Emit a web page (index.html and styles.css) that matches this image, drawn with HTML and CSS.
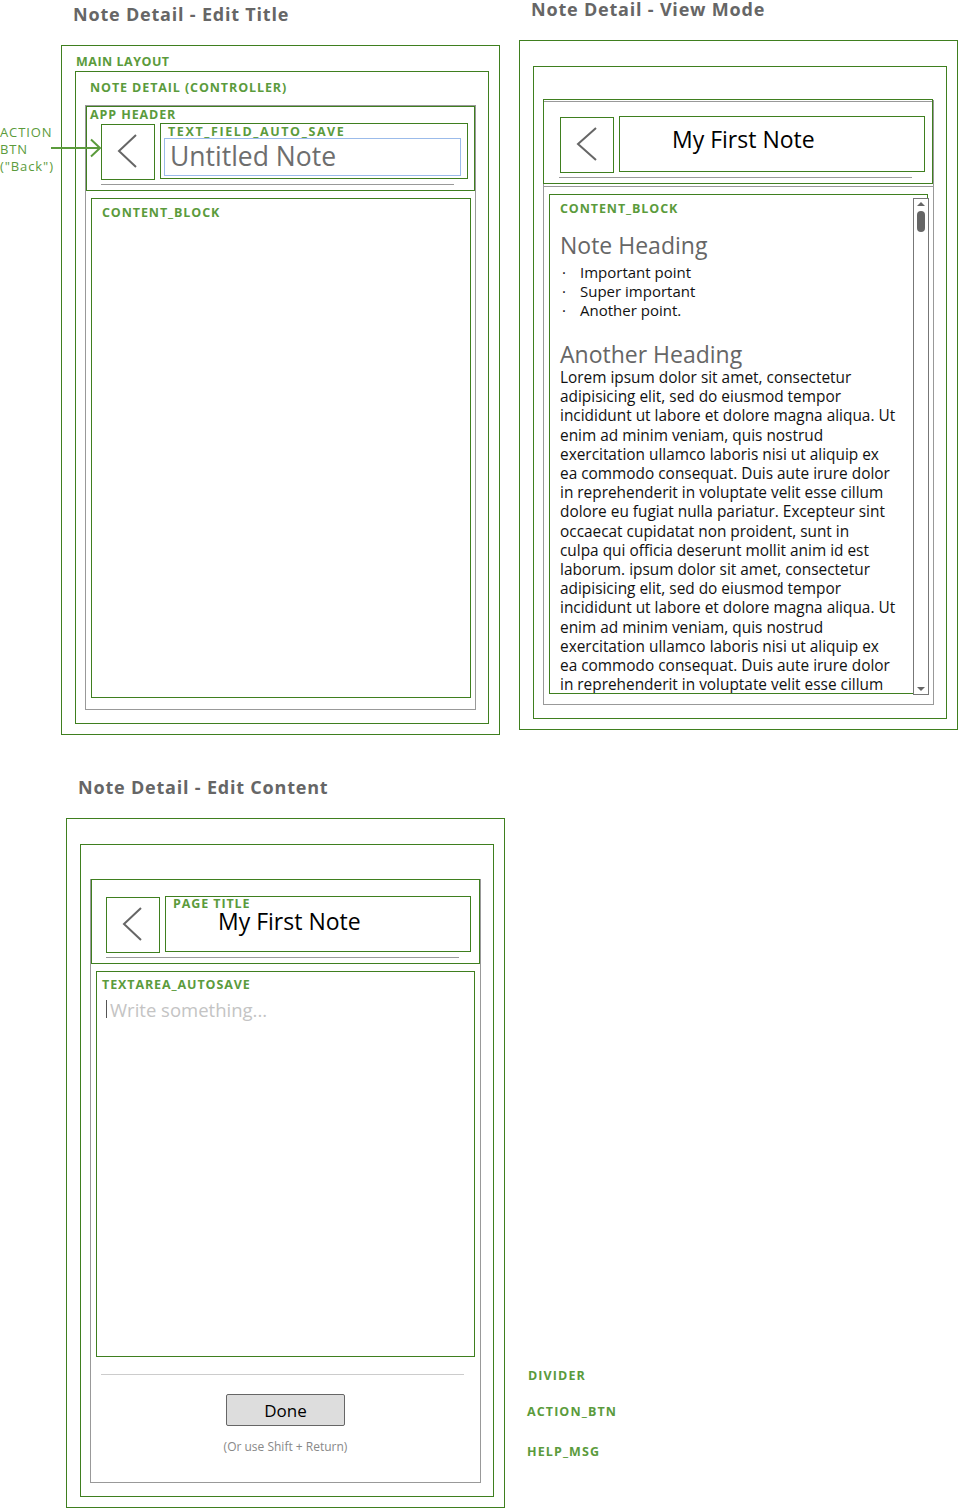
FILE: index.html
```html
<!DOCTYPE html>
<html>
<head>
<meta charset="utf-8">
<title>Note Detail wireframes</title>
<link rel="stylesheet" href="styles.css">
</head>
<body>
<div class="board">

  <section class="sheet sheet-a">
    <h2 class="sheet-title">Note Detail - Edit Title</h2>
    <div class="frame">
      <div class="frame-top"><span class="lbl">MAIN LAYOUT</span></div>
      <div class="ctrl">
        <div class="ctrl-top"><span class="lbl">NOTE DETAIL (CONTROLLER)</span></div>
        <div class="phone">
          <div class="hdr hdr-a">
            <div class="hdr-label lbl">APP HEADER</div>
            <div class="hdr-row">
              <div class="back"><svg width="52" height="54" viewBox="0 0 52 54"><polyline points="34,10 17,26 34,42" fill="none" stroke="#666" stroke-width="2"/></svg></div>
              <div class="field">
                <div class="field-label lbl">TEXT_FIELD_AUTO_SAVE</div>
                <div class="input">Untitled Note</div>
              </div>
            </div>
            <div class="hdr-line"></div>
          </div>
          <div class="content content-a">
            <div class="content-label lbl">CONTENT_BLOCK</div>
          </div>
        </div>
      </div>
    </div>
    <div class="note note-back">ACTION<br>BTN<br>("Back")</div>
    <svg class="arrow" width="52" height="20" viewBox="0 0 52 20"><line x1="0" y1="10" x2="49" y2="10" stroke="#5b9b3c" stroke-width="2"/><polyline points="40,1.5 49,10 40,18.5" fill="none" stroke="#5b9b3c" stroke-width="2"/></svg>
  </section>

  <section class="sheet sheet-b">
    <h2 class="sheet-title">Note Detail - View Mode</h2>
    <div class="frame">
      <div class="frame-top"></div>
      <div class="ctrl">
        <div class="ctrl-top"></div>
        <div class="phone">
          <div class="hdr hdr-b">
            <div class="hdr-row">
              <div class="back"><svg width="52" height="54" viewBox="0 0 52 54"><polyline points="35,10 17,26 35,42" fill="none" stroke="#666" stroke-width="2"/></svg></div>
              <div class="titlebox"><span class="title-text">My First Note</span></div>
            </div>
            <div class="hdr-line"></div>
          </div>
          <div class="hdr-under"></div>
          <div class="content content-b">
            <div class="content-label lbl">CONTENT_BLOCK</div>
            <h3 class="note-h note-h1">Note Heading</h3>
            <ul class="bullets">
              <li><span class="dot">·</span>Important point</li>
              <li><span class="dot">·</span>Super important</li>
              <li><span class="dot">·</span>Another point.</li>
            </ul>
            <h3 class="note-h note-h2">Another Heading</h3>
            <p class="lorem">Lorem ipsum dolor sit amet, consectetur<br>adipisicing elit, sed do eiusmod tempor<br>incididunt ut labore et dolore magna aliqua. Ut<br>enim ad minim veniam, quis nostrud<br>exercitation ullamco laboris nisi ut aliquip ex<br>ea commodo consequat. Duis aute irure dolor<br>in reprehenderit in voluptate velit esse cillum<br>dolore eu fugiat nulla pariatur. Excepteur sint<br>occaecat cupidatat non proident, sunt in<br>culpa qui officia deserunt mollit anim id est<br>laborum. ipsum dolor sit amet, consectetur<br>adipisicing elit, sed do eiusmod tempor<br>incididunt ut labore et dolore magna aliqua. Ut<br>enim ad minim veniam, quis nostrud<br>exercitation ullamco laboris nisi ut aliquip ex<br>ea commodo consequat. Duis aute irure dolor<br>in reprehenderit in voluptate velit esse cillum</p>
          </div>
          <div class="scrollbar">
            <span class="sb-up"></span>
            <span class="sb-thumb"></span>
            <span class="sb-down"></span>
          </div>
        </div>
      </div>
    </div>
  </section>

  <section class="sheet sheet-c">
    <h2 class="sheet-title">Note Detail - Edit Content</h2>
    <div class="frame">
      <div class="frame-top"></div>
      <div class="ctrl">
        <div class="ctrl-top ctrl-top-c"></div>
        <div class="phone">
          <div class="hdr hdr-c">
            <div class="hdr-row">
              <div class="back"><svg width="52" height="54" viewBox="0 0 52 54"><polyline points="34,10 17,26 34,42" fill="none" stroke="#666" stroke-width="2"/></svg></div>
              <div class="titlebox titlebox-c">
                <div class="field-label lbl">PAGE TITLE</div>
                <span class="title-text">My First Note</span>
              </div>
            </div>
            <div class="hdr-line"></div>
          </div>
          <div class="content content-c">
            <div class="content-label lbl">TEXTAREA_AUTOSAVE</div>
            <div class="placeholder"><span class="caret"></span>Write something...</div>
          </div>
          <div class="divider"></div>
          <button class="done" type="button">Done</button>
          <p class="help">(Or use Shift + Return)</p>
        </div>
      </div>
    </div>
    <div class="note note-side note-divider">DIVIDER</div>
    <div class="note note-side note-action">ACTION_BTN</div>
    <div class="note note-side note-help">HELP_MSG</div>
  </section>

</div>
</body>
</html>
```

FILE: styles.css
```css
* {
  box-sizing: border-box;
  margin: 0;
  padding: 0;
}

body {
  width: 958px;
  height: 1508px;
  overflow: hidden;
  background: #fff;
  font-family: "Open Sans", Lato, sans-serif;
  color: #111;
}

.board {
  display: grid;
  grid-template-columns: 439px 439px;
  column-gap: 19px;
  padding-left: 61px;
  align-items: start;
}

.sheet {
  position: relative;
}

.sheet-title {
  font-size: 18px;
  font-weight: 700;
  color: #666;
  padding-left: 12px;
  letter-spacing: 0.8px;
  white-space: nowrap;
}

.sheet-a .sheet-title {
  height: 45px;
  line-height: 28px;
}

.sheet-b .sheet-title {
  height: 40px;
  line-height: 18px;
}

.sheet-c {
  grid-column: 1;
  margin-left: 5px;
}

.sheet-c .sheet-title {
  height: 83px;
  padding-top: 40px;
  line-height: 24px;
}

.lbl {
  font-size: 12.5px;
  font-weight: 700;
  color: #5b9b3c;
  letter-spacing: 0.9px;
  line-height: 16px;
  white-space: nowrap;
}

.frame {
  width: 439px;
  height: 690px;
  border: 1px solid #3f7f1f;
  padding: 0 10px 10px 13px;
  display: flex;
  flex-direction: column;
}

.frame-top {
  height: 25px;
  flex: none;
  padding: 6px 0 0 1px;
  line-height: 16px;
}

.frame-top .lbl {
  letter-spacing: 0.5px;
}

.ctrl {
  flex: 1;
  border: 1px solid #3f7f1f;
  padding: 0 12px 13px 9px;
  display: flex;
  flex-direction: column;
}

.ctrl-top {
  height: 33px;
  flex: none;
  padding: 6px 0 0 5px;
  line-height: 16px;
}

.ctrl-top-c {
  height: 34px;
}

.phone {
  flex: 1;
  border: 1px solid #999;
  display: flex;
  flex-direction: column;
  position: relative;
}

.hdr {
  height: 85px;
  flex: none;
  border: 1px solid #3f7f1f;
}

.hdr-b {
  margin: -2px 0 0 -1px;
  width: 390px;
  box-shadow: inset 0 1px 0 #fff, inset 0 2px 0 #999;
}

.hdr-c {
  margin-top: -1px;
}

.hdr-label {
  height: 16px;
  padding-left: 3px;
}

.hdr-row {
  display: flex;
  align-items: flex-start;
  gap: 5px;
  margin-left: 14px;
}

.hdr-b .hdr-row {
  margin: 16px 0 0 16px;
}

.hdr-c .hdr-row {
  margin: 16px 0 0 14px;
}

.back {
  width: 54px;
  height: 56px;
  margin-top: 1px;
  border: 1px solid #3f7f1f;
  flex: none;
}

.back svg {
  display: block;
}

.field {
  width: 308px;
  height: 56px;
  border: 1px solid #3f7f1f;
  flex: none;
}

.field-label {
  height: 14px;
  line-height: 15px;
  padding-left: 7px;
}

.field .field-label {
  letter-spacing: 1.6px;
}

.input {
  margin-left: 3px;
  width: 297px;
  height: 38px;
  border: 1px solid #9bbbea;
  padding-left: 5px;
  font-size: 26.5px;
  line-height: 35px;
  color: #6e6e6e;
  white-space: nowrap;
}

.titlebox {
  width: 306px;
  height: 56px;
  border: 1px solid #3f7f1f;
  flex: none;
  padding-left: 52px;
  line-height: 45px;
}

.title-text {
  font-size: 23px;
  color: #000;
  white-space: nowrap;
}

.titlebox-c {
  padding-left: 0;
  line-height: normal;
}

.titlebox-c .field-label {
  padding-left: 7px;
  margin-top: 1px;
  height: 13px;
  line-height: 12px;
}

.titlebox-c .title-text {
  display: block;
  padding-left: 52px;
  line-height: 20px;
}

.hdr-line {
  margin: 4px 0 0 14px;
  width: 353px;
  height: 1px;
  background: #999;
}

.hdr-b .hdr-line {
  margin-left: 15px;
}

.hdr-under {
  flex: none;
  height: 1px;
  margin-top: 2px;
  background: #999;
}

.content {
  flex: none;
  margin: 7px 0 0 5px;
  width: 380px;
  height: 500px;
  border: 1px solid #3f7f1f;
  overflow: hidden;
}

.content-b {
  width: 379px;
  padding-left: 10px;
}

.content-c {
  width: 379px;
  height: 386px;
}

.content-label {
  height: 22px;
  padding: 6px 0 0 10px;
}

.content-b .content-label {
  padding-left: 0;
}

.content-c .content-label {
  padding: 5px 0 0 5px;
  height: 21px;
}

.note-h {
  font-size: 23px;
  font-weight: 400;
  color: #666;
  white-space: nowrap;
}

.note-h1 {
  margin-top: 14px;
  line-height: 28px;
}

.bullets {
  list-style: none;
  margin-top: 4px;
  font-size: 15px;
  line-height: 19px;
}

.bullets li {
  display: flex;
  white-space: nowrap;
}

.dot {
  width: 20px;
  padding-left: 2px;
}

.note-h2 {
  margin-top: 21px;
  line-height: 27px;
}

.lorem {
  font-size: 15.4px;
  line-height: 19.2px;
  white-space: nowrap;
}

.scrollbar {
  position: absolute;
  left: 369px;
  top: 97px;
  width: 16px;
  height: 497px;
  border: 1px solid #777;
  background: #fff;
  display: flex;
  flex-direction: column;
  align-items: center;
}

.sb-up {
  margin-top: 3px;
  width: 0;
  height: 0;
  border-left: 4px solid transparent;
  border-right: 4px solid transparent;
  border-bottom: 4px solid #666;
}

.sb-thumb {
  margin-top: 5px;
  width: 8px;
  height: 21px;
  border-radius: 4px;
  background: #666;
}

.sb-down {
  margin-top: auto;
  margin-bottom: 3px;
  width: 0;
  height: 0;
  border-left: 4px solid transparent;
  border-right: 4px solid transparent;
  border-top: 4px solid #666;
}

.placeholder {
  display: flex;
  align-items: center;
  padding-left: 9px;
  margin-top: 4px;
  height: 24px;
  font-size: 18.5px;
  color: #c4c4c4;
  white-space: nowrap;
}

.caret {
  width: 1px;
  height: 18px;
  background: #555;
  margin-right: 3px;
}

.divider {
  flex: none;
  margin: 17px 0 0 10px;
  width: 363px;
  height: 1px;
  background: #ccc;
}

.done {
  flex: none;
  align-self: center;
  margin-top: 19px;
  width: 119px;
  height: 32px;
  border: 1px solid #666;
  border-radius: 2px;
  background: #ddd;
  font-family: "Open Sans", Lato, sans-serif;
  font-size: 17px;
  color: #000;
}

.help {
  margin-top: 13px;
  text-align: center;
  font-size: 12px;
  line-height: 16px;
  color: #888;
}

.note {
  position: absolute;
  color: #5b9b3c;
  white-space: nowrap;
}

.note-back {
  left: -61px;
  top: 124px;
  font-size: 13px;
  letter-spacing: 0.9px;
  line-height: 17px;
}

.arrow {
  position: absolute;
  left: -10px;
  top: 138px;
}

.note-side {
  font-size: 12.5px;
  font-weight: 700;
  letter-spacing: 1.1px;
  line-height: 16px;
}

.note-divider {
  left: 462px;
  top: 633px;
}

.note-action {
  left: 461px;
  top: 669px;
}

.note-help {
  left: 461px;
  top: 709px;
}
```
